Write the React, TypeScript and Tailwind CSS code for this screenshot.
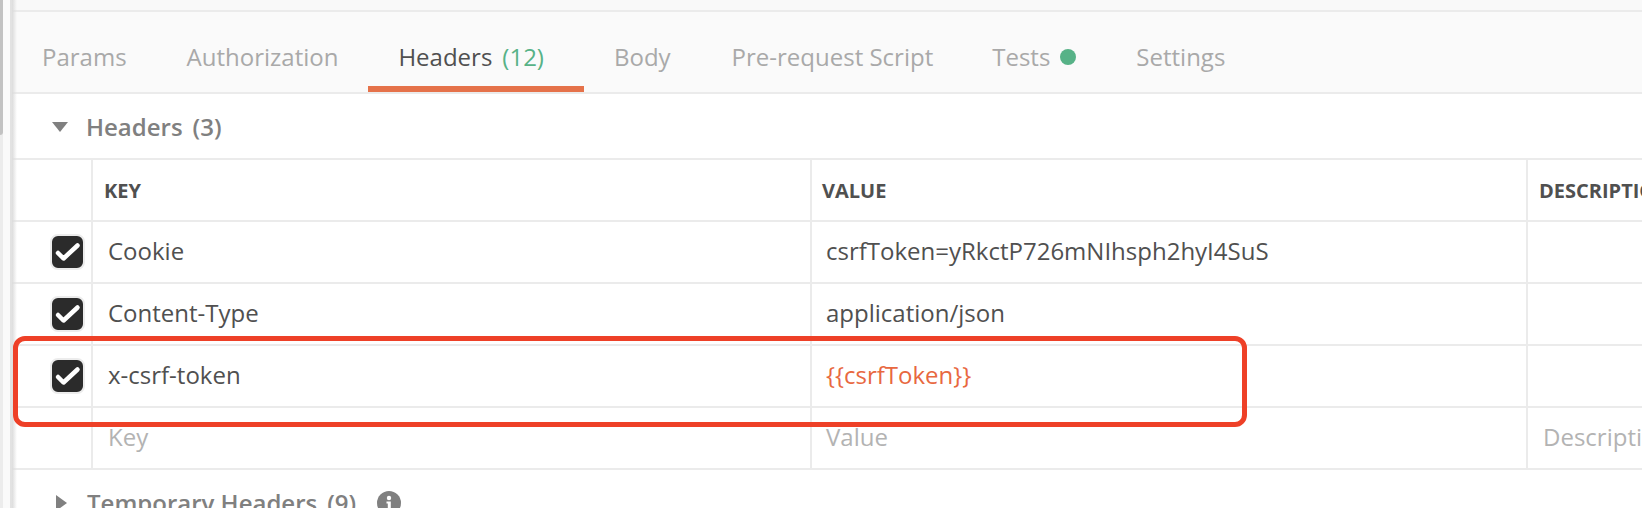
import React from 'react';

const tabs = ['Params', 'Authorization'];

const Check = () => (
  <div className="w-[35px] h-[36px] rounded-[8px] bg-[#2b2b2b] border-2 border-[#ececec] flex items-center justify-center">
    <svg width="31" height="32" viewBox="0 0 31 32" fill="none">
      <path d="M6 17 L11.5 22.5 L25.5 9.5" stroke="#ffffff" strokeWidth="4.5" strokeLinecap="round" strokeLinejoin="round" />
    </svg>
  </div>
);

const Row = ({ k, v, desc, checked, placeholder, orange }: { k: string; v: string; desc?: string; checked?: boolean; placeholder?: boolean; orange?: boolean }) => (
  <div className="flex h-[62px] shrink-0 border-b-2 border-[#ebebeb] text-[24px]">
    <div className="w-[81px] shrink-0 border-r-2 border-[#ebebeb] flex items-center pl-[38px]">{checked && <Check />}</div>
    <div className={`w-[719px] shrink-0 border-r-2 border-[#ebebeb] flex items-center pl-[15px] pb-[2px] ${placeholder ? 'text-[#b3b3b3]' : 'text-[#505050]'}`}>{k}</div>
    <div className={`w-[716px] shrink-0 border-r-2 border-[#ebebeb] flex items-center pl-[14px] pb-[2px] ${placeholder ? 'text-[#b3b3b3]' : orange ? 'text-[#e8683f]' : 'text-[#505050]'}`}>{v}</div>
    <div className="flex-1 flex items-center pl-[15px] pb-[2px] text-[#b3b3b3] whitespace-nowrap overflow-hidden">{desc}</div>
  </div>
);

export default function App() {
  return (
    <div className="relative flex h-[508px] w-[1642px] overflow-hidden bg-white font-['Open_Sans',sans-serif]">
      {/* left edge */}
      <div className="w-[12px] shrink-0 flex">
        <div className="w-[3px] bg-[#ececec]">
          <div className="h-[135px] bg-[#c2c2c2] rounded-br-[3px]" />
        </div>
        <div className="w-[7px] bg-[#fafafa]" />
        <div className="w-[2px] bg-[#e2e2e2]" />
      </div>

      <div className="flex-1 min-w-0 flex flex-col">
        <div className="h-[12px] shrink-0 bg-[#f9f9f9] border-b-2 border-[#ebebeb]" />

        {/* tabs */}
        <div className="h-[82px] shrink-0 bg-[#fafafa] border-b-2 border-[#ebebeb] flex text-[24px] text-[#a9a9a9]">
          {tabs.map((t) => (
            <div key={t} className="px-[30px] pt-[10px] flex items-center">{t}</div>
          ))}
          <div className="pl-[30px] pr-[40px] pt-[16px] flex items-center border-b-[6px] border-[#e5724a] text-[#505050]">
            Headers<span className="ml-[10px] text-[#57b287]">(12)</span>
          </div>
          <div className="px-[30px] pt-[10px] flex items-center">Body</div>
          <div className="pl-[31px] pr-[29px] pt-[10px] flex items-center">Pre-request Script</div>
          <div className="px-[30px] pt-[10px] flex items-center">
            Tests<span className="ml-[10px] w-[16px] h-[16px] rounded-full bg-[#57b287]" />
          </div>
          <div className="px-[30px] pt-[10px] flex items-center">Settings</div>
        </div>

        {/* headers section */}
        <div className="h-[66px] shrink-0 flex items-center border-b-2 border-[#ebebeb] pl-[40px] pt-[2px] text-[24px] text-[#808080] font-semibold">
          <svg width="16" height="10" viewBox="0 0 16 10" className="mr-[18px]">
            <path d="M0 0 H16 L8 10 Z" fill="#808080" />
          </svg>
          <span>Headers</span>
          <span className="ml-[10px]">(3)</span>
        </div>

        <div className="flex h-[62px] shrink-0 border-b-2 border-[#ebebeb] text-[20px] font-bold text-[#505050]">
          <div className="w-[81px] shrink-0 border-r-2 border-[#ebebeb]" />
          <div className="w-[719px] shrink-0 border-r-2 border-[#ebebeb] flex items-center pl-[11px] pt-[2px]">KEY</div>
          <div className="w-[716px] shrink-0 border-r-2 border-[#ebebeb] flex items-center pl-[10px] pt-[2px]">VALUE</div>
          <div className="flex-1 flex items-center pl-[11px] pt-[2px] whitespace-nowrap overflow-hidden">DESCRIPTION</div>
        </div>

        <Row k="Cookie" v="csrfToken=yRkctP726mNIhsph2hyI4SuS" checked />
        <Row k="Content-Type" v="application/json" checked />
        <Row k="x-csrf-token" v="{{csrfToken}}" checked orange />
        <Row k="Key" v="Value" desc="Description" placeholder />

        {/* temporary headers */}
        <div className="h-[66px] shrink-0 flex items-center pl-[44px] text-[24px] text-[#808080] font-semibold whitespace-nowrap">
          <svg width="11" height="16" viewBox="0 0 11 16" className="mr-[20px]">
            <path d="M0 0 L11 8 L0 16 Z" fill="#808080" />
          </svg>
          <span>Temporary Headers</span>
          <span className="ml-[10px]">(9)</span>
          <svg width="24" height="24" viewBox="0 0 24 24" className="ml-[21px]">
            <circle cx="12" cy="12" r="12" fill="#808080" />
            <circle cx="12" cy="7" r="2.2" fill="#ffffff" />
            <path d="M9.5 10.5 H13.8 V17 H15 V19 H9.5 V17 H10.8 V12.5 H9.5 Z" fill="#ffffff" />
          </svg>
        </div>
      </div>

      {/* inner shadow along the left edge */}
      <div className="absolute left-[12px] top-0 bottom-0 w-[5px] bg-gradient-to-r from-[#dcdcdc] to-transparent" />

      {/* red annotation box */}
      <div className="absolute left-[13px] top-[336px] w-[1234px] h-[91px] rounded-[12px] border-[5px] border-[#ee4027]" />
    </div>
  );
}
